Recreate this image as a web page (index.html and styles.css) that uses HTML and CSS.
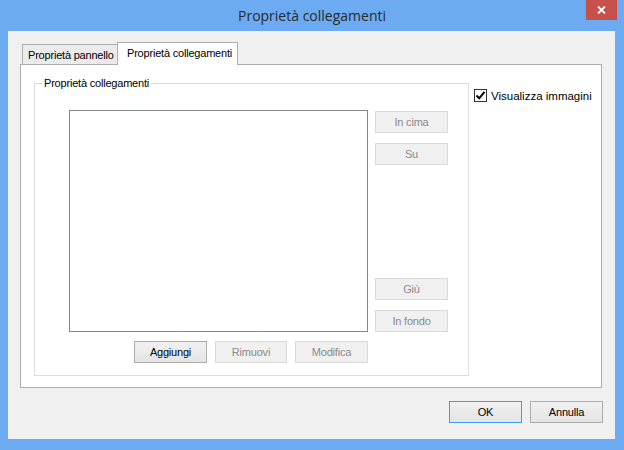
FILE: index.html
```html
<!DOCTYPE html>
<html lang="it">
<head>
    <meta charset="UTF-8">
    <title>Proprietà collegamenti</title>
    <link rel="stylesheet" href="styles.css">
</head>
<body>
    <div class="window">
        <div class="titlebar">
            <span></span>
            <span class="title">Proprietà collegamenti</span>
            <div class="close">
                <svg width="9" height="8" viewBox="0 0 9 8">
                    <path d="M1 0.5 L8 7.5 M8 0.5 L1 7.5" stroke="#fff" stroke-width="1.8" fill="none"/>
                </svg>
            </div>
        </div>

        <div class="client">
            <div class="tabs">
                <div class="tab">Proprietà pannello</div>
                <div class="tab active">Proprietà collegamenti</div>
            </div>

            <div class="panel">
                <fieldset class="group">
                    <legend>Proprietà collegamenti</legend>
                    <div class="list-area">
                        <div class="listbox"></div>
                        <div class="side-buttons">
                            <div class="btn-pair">
                                <button class="btn" disabled>In cima</button>
                                <button class="btn" disabled>Su</button>
                            </div>
                            <div class="btn-pair">
                                <button class="btn" disabled>Giù</button>
                                <button class="btn" disabled>In fondo</button>
                            </div>
                        </div>
                    </div>
                    <div class="bottom-buttons">
                        <button class="btn">Aggiungi</button>
                        <button class="btn narrow" disabled>Rimuovi</button>
                        <button class="btn" disabled>Modifica</button>
                    </div>
                </fieldset>

                <label class="check">
                    <span class="box">
                        <svg width="11" height="11" viewBox="0 0 11 11">
                            <path d="M1.5 5.5 L4.2 8.3 L9.5 1.8" stroke="#000" stroke-width="2" fill="none"/>
                        </svg>
                    </span>
                    Visualizza immagini
                </label>
            </div>

            <div class="dialog-buttons">
                <button class="btn default">OK</button>
                <button class="btn">Annulla</button>
            </div>
        </div>
    </div>
</body>
</html>
```

FILE: styles.css
```css
* {
    box-sizing: border-box;
    margin: 0;
    padding: 0;
}

body {
    width: 624px;
    height: 450px;
    font-family: "Liberation Sans", Arial, sans-serif;
    font-size: 11px;
    letter-spacing: -0.2px;
    color: #000;
}

.window {
    display: flex;
    flex-direction: column;
    width: 624px;
    height: 450px;
    background-color: #6cabf1;
}

.titlebar {
    display: grid;
    grid-template-columns: 1fr auto 1fr;
    height: 31px;
}

.title {
    padding-top: 6px;
    font-family: "Open Sans", sans-serif;
    font-size: 14px;
    letter-spacing: 0;
    color: #2a2a2a;
}

.close {
    justify-self: end;
    display: flex;
    align-items: center;
    justify-content: center;
    width: 31px;
    height: 20px;
    margin-right: 7px;
    background-color: #c7504b;
}

.client {
    flex: 1;
    margin: 0 9px 11px 8px;
    padding: 11px 13px 0 12px;
    background-color: #f0f0f0;
}

.tabs {
    display: flex;
    align-items: flex-end;
    height: 22px;
    padding-left: 2px;
}

.tab {
    height: 20px;
    width: 96px;
    padding-left: 5px;
    line-height: 20px;
    white-space: nowrap;
    background-color: #ebebeb;
    border: 1px solid #adadad;
    border-bottom: none;
}

.tab.active {
    position: relative;
    z-index: 1;
    width: 121px;
    height: 23px;
    margin-left: -1px;
    margin-bottom: -1px;
    padding-left: 9px;
    line-height: 20px;
    background-color: #fff;
}

.panel {
    display: flex;
    align-items: flex-start;
    height: 324px;
    padding: 12px 0 0 13px;
    background-color: #fff;
    border: 1px solid #adadad;
}

.group {
    flex-shrink: 0;
    width: 435px;
    height: 299px;
    padding: 0 0 0 34px;
    border: 1px solid #dcdcdc;
}

.group legend {
    margin-left: -27px;
    padding: 0 2px;
    color: #000;
}

.list-area {
    display: flex;
    margin-top: 21px;
}

.listbox {
    width: 299px;
    height: 222px;
    background-color: #fff;
    border: 1px solid #828790;
}

.side-buttons {
    display: flex;
    flex-direction: column;
    justify-content: space-between;
    margin-left: 7px;
    padding-top: 1px;
}

.btn-pair {
    display: flex;
    flex-direction: column;
    gap: 10px;
}

.btn {
    width: 73px;
    height: 22px;
    font-family: "Liberation Sans", Arial, sans-serif;
    font-size: 11px;
    letter-spacing: -0.2px;
    color: #000;
    background: linear-gradient(#f1f1f1, #e4e4e4);
    border: 1px solid #acacac;
}

.btn:disabled {
    color: #8a8a8a;
    background: #f0f0f0;
    border-color: #dadada;
}

.btn.default {
    border-color: #3c9ef2;
}

.btn.narrow {
    width: 72px;
}

.bottom-buttons {
    display: flex;
    gap: 8px;
    margin: 9px 0 0 65px;
}

.check {
    display: flex;
    align-items: center;
    gap: 4px;
    margin: 12px 0 0 5px;
    font-size: 11.5px;
    letter-spacing: 0;
    white-space: nowrap;
}

.box {
    display: flex;
    align-items: center;
    justify-content: center;
    width: 13px;
    height: 13px;
    background-color: #fff;
    border: 1px solid #333;
}

.dialog-buttons {
    display: flex;
    justify-content: flex-end;
    gap: 8px;
    margin-top: 13px;
    margin-right: -1px;
}
```
